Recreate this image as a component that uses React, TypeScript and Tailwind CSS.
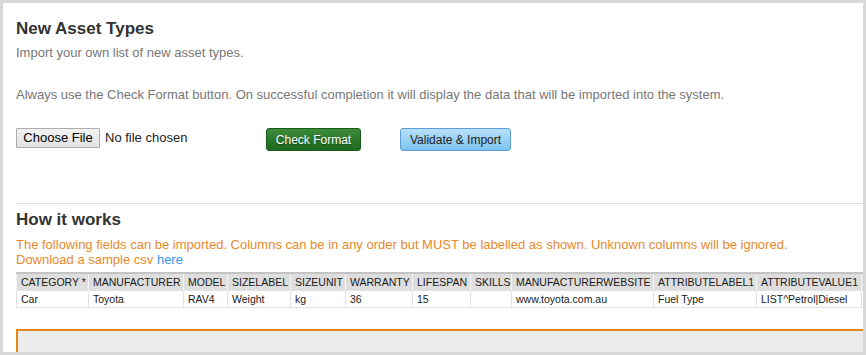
const columns = [
  { label: "CATEGORY *", value: "Car", width: 72 },
  { label: "MANUFACTURER", value: "Toyota", width: 95 },
  { label: "MODEL", value: "RAV4", width: 44 },
  { label: "SIZELABEL", value: "Weight", width: 63 },
  { label: "SIZEUNIT", value: "kg", width: 55 },
  { label: "WARRANTY", value: "36", width: 67 },
  { label: "LIFESPAN", value: "15", width: 58 },
  { label: "SKILLS", value: "", width: 41 },
  { label: "MANUFACTURERWEBSITE", value: "www.toyota.com.au", width: 142 },
  { label: "ATTRIBUTELABEL1", value: "Fuel Type", width: 103 },
  { label: "ATTRIBUTEVALUE1", value: "LIST^Petrol|Diesel", width: 105 },
  { label: "", value: "", width: 60 },
];

const tableWidth = columns.reduce((sum, c) => sum + c.width, 0);

export default function App() {
  return (
    <div className="h-[355px] w-[866px] overflow-hidden bg-[#d8d8d8] p-[3px] font-['Liberation_Sans',Arial,sans-serif]">
      <div className="h-full overflow-hidden bg-white pl-[13px] pt-[16px]">
        <h1 className="text-[17px] font-bold leading-[20px] text-[#333]">New Asset Types</h1>
        <p className="mt-[6px] text-[13px] leading-[16px] text-[#777]">Import your own list of new asset types.</p>
        <p className="mt-[26px] text-[13px] leading-[16px] text-[#777]">
          Always use the Check Format button. On successful completion it will display the data that will be imported into the system.
        </p>

        <div className="mt-[25px] flex h-[23px] items-start">
          <div className="flex w-[250px] items-center">
            <button className="h-[20px] w-[84px] rounded-[1px] border border-[#adadad] bg-gradient-to-b from-[#f2f2f2] to-[#e2e2e2] text-[13px] leading-[18px] text-black">
              Choose File
            </button>
            <span className="ml-[5px] text-[13px] leading-[20px] text-[#222]">No file chosen</span>
          </div>
          <button className="h-[23px] w-[95px] rounded-[3px] border border-[#185a18] bg-gradient-to-b from-[#3b8c3b] to-[#1c681c] text-[12px] leading-[22px] text-white [text-shadow:0_1px_1px_rgba(0,0,0,0.4)]">
            Check Format
          </button>
          <button className="ml-[39px] h-[23px] w-[111px] rounded-[3px] border border-[#5b9fd6] bg-gradient-to-b from-[#b8e0fb] to-[#7bc2ee] text-[12px] leading-[22px] text-[#222]">
            Validate &amp; Import
          </button>
        </div>

        <div className="mt-[52px] h-px bg-[#dddddd]" />

        <h2 className="mt-[6px] text-[17px] font-bold leading-[20px] text-[#333]">How it works</h2>
        <p className="mt-[7px] text-[13px] leading-[15px] text-[#e8892b]">
          The following fields can be imported. Columns can be in any order but MUST be labelled as shown. Unknown columns will be ignored.
          <br />
          Download a sample csv <a className="text-[#3399ee]">here</a>
        </p>

        <table
          style={{ width: tableWidth }}
          className="mt-[5px] table-fixed border-collapse border-t-2 border-[#c4c4c4] text-[10.5px] leading-[16px] text-[#1a1a1a]"
        >
          <colgroup>
            {columns.map((c, i) => (
              <col key={i} style={{ width: c.width }} />
            ))}
          </colgroup>
          <thead>
            <tr className="bg-[#dedede]">
              {columns.map((c, i) => (
                <th key={i} className="overflow-hidden whitespace-nowrap border-x border-[#f4f4f4] px-[4px] text-left font-normal">
                  {c.label}
                </th>
              ))}
            </tr>
          </thead>
          <tbody>
            <tr>
              {columns.map((c, i) => (
                <td key={i} className="h-[17px] overflow-hidden whitespace-nowrap border border-[#e2e2e2] px-[4px]">
                  {c.value}
                </td>
              ))}
            </tr>
          </tbody>
        </table>

        <div className="mt-[21px] h-[40px] w-[900px] border-2 border-[#e0861a] bg-[#ececec]" />
      </div>
    </div>
  );
}
